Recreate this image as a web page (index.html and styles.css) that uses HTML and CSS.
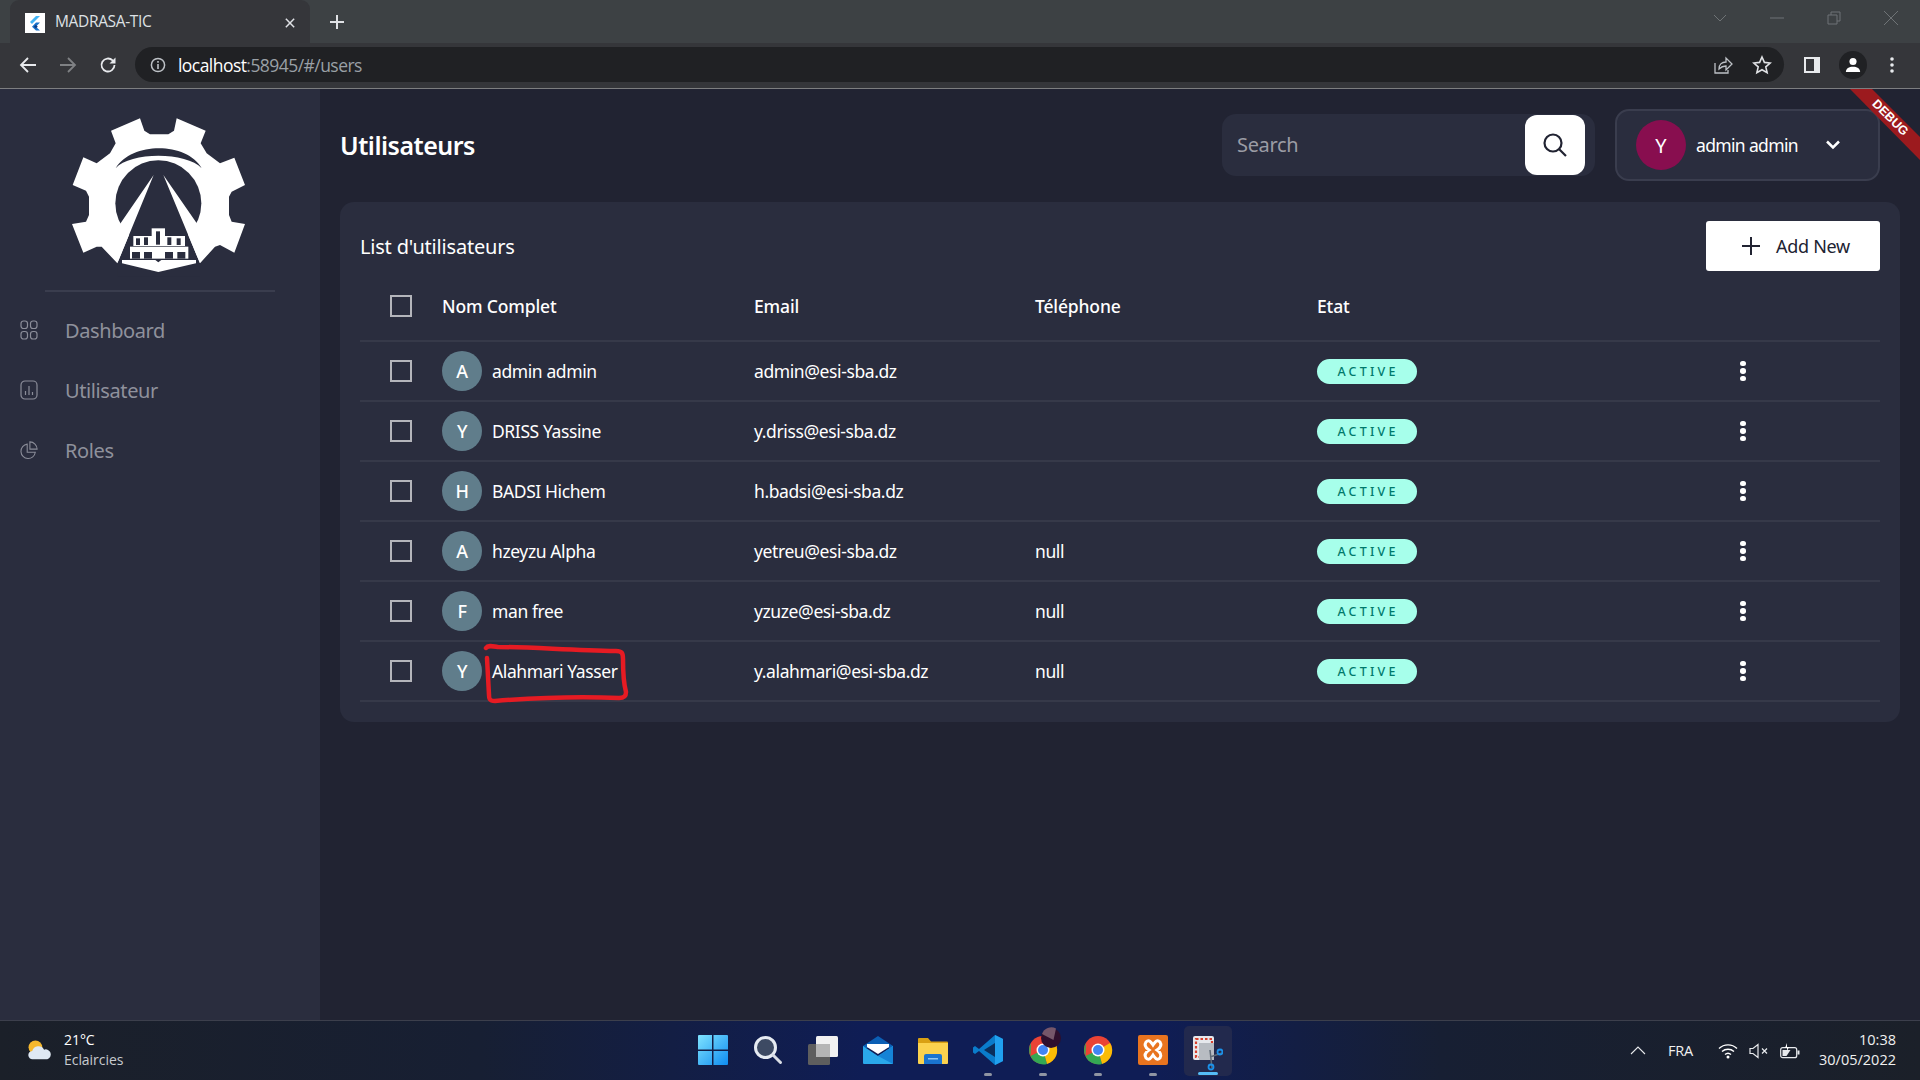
FILE: index.html
```html
<!DOCTYPE html>
<html lang="fr">
<head>
<meta charset="utf-8">
<title>MADRASA-TIC</title>
<link rel="stylesheet" href="styles.css">
</head>
<body>
<div class="window">
  <div class="tabstrip">
    <div class="tab">
      <svg class="favicon" viewBox="0 0 20 20"><rect width="20" height="20" fill="#fff"/><path d="M11 3h4l-8 8-2-2z" fill="#42b4f5"/><path d="M11 9.5h4l-4.2 4.2 4.2 3.8h-4l-4-3.8z" fill="#1a73c9"/><path d="M8.8 13.7l2-2 2 2-2 1.9z" fill="#0b3e8a"/></svg>
      <span class="tab-title">MADRASA-TIC</span>
      <svg class="tab-close" viewBox="0 0 12 12"><path d="M1 1l10 10M11 1L1 11" stroke="#dfe1e5" stroke-width="1.8"/></svg>
    </div>
    <svg class="tab-new" viewBox="0 0 16 16"><path d="M8 1v14M1 8h14" stroke="#dfe1e5" stroke-width="2"/></svg>
    <div class="winctl">
      <svg viewBox="0 0 14 14"><path d="M1 4l6 6 6-6" fill="none" stroke="#6f7376" stroke-width="1"/></svg>
      <svg viewBox="0 0 14 14"><path d="M0 7h14" stroke="#6f7376" stroke-width="1"/></svg>
      <svg viewBox="0 0 14 14"><path d="M1 4h9v9H1zM4 4V1h9v9h-3" fill="none" stroke="#6f7376" stroke-width="1"/></svg>
      <svg viewBox="0 0 14 14"><path d="M0 0l14 14M14 0L0 14" stroke="#6f7376" stroke-width="1"/></svg>
    </div>
  </div>
  <div class="toolbar">
    <svg class="tb-nav" viewBox="0 0 18 18"><path d="M17 9H2M9 2L2 9l7 7" fill="none" stroke="#e8eaed" stroke-width="1.8"/></svg>
    <svg class="tb-nav" viewBox="0 0 18 18"><path d="M1 9h15M9 2l7 7-7 7" fill="none" stroke="#7f8184" stroke-width="1.8"/></svg>
    <svg class="tb-nav" viewBox="0 0 18 18"><path d="M15.5 9a6.5 6.5 0 1 1-1.9-4.6L15.5 6.500" fill="none" stroke="#e8eaed" stroke-width="1.8"/><path d="M16.500 1.500v6h-6z" fill="#e8eaed"/></svg>
    <div class="omnibox">
      <svg class="omni-info" viewBox="0 0 16 16"><circle cx="8" cy="8" r="6.600" fill="none" stroke="#bdc1c6" stroke-width="1.500"/><path d="M8 7v5M8 4v1.700" stroke="#bdc1c6" stroke-width="1.600"/></svg>
      <span class="url"><span class="url-host">localhost</span>:58945/#/users</span>
      <svg class="omni-share" viewBox="0 0 20 20"><path d="M2 8v10h13v-3" fill="none" stroke="#bdc1c6" stroke-width="1.300"/><path d="M6 14c0-5 3-7 7-7V3l6 6-6 6v-4c-3 0-5 1-7 3z" fill="none" stroke="#bdc1c6" stroke-width="1.300"/></svg>
      <svg class="omni-star" viewBox="0 0 20 20"><path d="M10 2l2.400 5.400 5.800.6-4.400 3.900 1.300 5.800L10 14.700l-5.100 3 1.300-5.800L1.800 8l5.800-.6z" fill="none" stroke="#e0e2e5" stroke-width="1.600"/></svg>
    </div>
    <div class="tb-right">
      <svg class="tb-panel" viewBox="0 0 18 18"><rect x="1" y="1" width="16" height="16" fill="#e8eaed"/><rect x="3" y="3" width="8" height="12" fill="#35363a"/></svg>
      <div class="tb-profile"><svg viewBox="0 0 18 18"><circle cx="9" cy="5" r="4" fill="#fff"/><path d="M1 17c0-4 3.500-6 8-6s8 2 8 6z" fill="#fff"/></svg></div>
      <svg class="tb-menu" viewBox="0 0 4 18"><circle cx="2" cy="3" r="1.800" fill="#e8eaed"/><circle cx="2" cy="9" r="1.800" fill="#e8eaed"/><circle cx="2" cy="15" r="1.800" fill="#e8eaed"/></svg>
    </div>
  </div>
  <div class="app">
    <aside class="sidebar">
      <svg class="logo" viewBox="0 0 660 570">
        <path fill="#fff" d="M183 92L270 55L283 92L300 103H355L372 92L380 55L467 92L452 130L470 160L510 190L553 173L585 255L545 275L537 290V345L545 365L585 372L553 458L510 435L495 440L450 490H202L155 440L140 440L100 458L66 372L108 365L117 345V290L108 272L68 255L100 172L140 190L180 160L197 130Z"/>
        <circle cx="325" cy="310" r="129" fill="#2a2d3e"/>
        <path fill="#2a2d3e" d="M311 225H340L450 490V530H202V490Z"/>
        <path fill="#fff" d="M311 225L208 375L202 490ZM340 225L446 378L450 490Z"/>
        <path fill="#2a2d3e" d="M197 205C245 125 410 125 455 205C410 155 240 155 197 205Z"/>
        <g fill="#fff">
          <rect x="250" y="408" width="155" height="30"/>
          <rect x="305" y="385" width="40" height="25"/>
          <rect x="240" y="440" width="175" height="36"/>
          <path d="M216 480H316L325 487L334 480H438V490L325 516L216 490Z"/>
        </g>
        <g fill="#2a2d3e">
          <rect x="258" y="415" width="12" height="20"/><rect x="282" y="412" width="12" height="23"/><rect x="318" y="394" width="12" height="40"/><rect x="352" y="412" width="12" height="23"/><rect x="380" y="415" width="12" height="20"/>
          <rect x="246" y="456" width="24" height="20"/><rect x="282" y="456" width="24" height="20"/><rect x="345" y="456" width="24" height="20"/><rect x="382" y="456" width="24" height="20"/>
        </g>
      </svg>
      <div class="side-divider"></div>
      <nav class="nav">
        <a class="nav-item"><svg viewBox="0 0 18 20"><g fill="none" stroke="#8b8d99" stroke-width="1.200"><rect x="1" y="1" width="6.500" height="7.500" rx="2.500"/><rect x="10.500" y="1" width="6.500" height="7.500" rx="2.500"/><rect x="1" y="11.500" width="6.500" height="7.500" rx="2.500"/><rect x="10.500" y="11.500" width="6.500" height="7.500" rx="2.500"/></g></svg><span>Dashboard</span></a>
        <a class="nav-item"><svg viewBox="0 0 18 20"><g fill="none" stroke="#8b8d99" stroke-width="1.200"><rect x="1" y="1" width="16" height="18" rx="4"/><path d="M5.500 11v4M9 6v9M12.500 12v3"/></g></svg><span>Utilisateur</span></a>
        <a class="nav-item"><svg viewBox="0 0 20 20"><g fill="none" stroke="#8b8d99" stroke-width="1.200"><path d="M8 3.500a8 8 0 1 0 9 9H8z"/><path d="M11 1a8 8 0 0 1 8 8h-8z"/></g></svg><span>Roles</span></a>
      </nav>
    </aside>
    <main class="main">
      <header class="topbar">
        <h1 class="page-title">Utilisateurs</h1>
        <div class="search">
          <span class="search-ph">Search</span>
          <button class="search-btn"><svg viewBox="0 0 26 26"><circle cx="11" cy="11" r="8.500" fill="none" stroke="#212332" stroke-width="2.200"/><path d="M17 17l7 7" stroke="#212332" stroke-width="2.200"/></svg></button>
        </div>
        <div class="user">
          <div class="user-avatar">Y</div>
          <span class="user-name">admin admin</span>
          <svg class="user-chev" viewBox="0 0 16 12"><path d="M2 2.500l6 6 6-6" fill="none" stroke="#fff" stroke-width="2.500"/></svg>
        </div>
      </header>
      <section class="card">
        <div class="card-head">
          <h2 class="card-title">List d'utilisateurs</h2>
          <button class="add-btn"><svg viewBox="0 0 18 18"><path d="M9 0v18M0 9h18" stroke="#212332" stroke-width="2"/></svg><span>Add New</span></button>
        </div>
        <div class="row row-head">
          <span class="check"></span><span>Nom Complet</span><span>Email</span><span>Téléphone</span><span>Etat</span>
        </div>
        <div class="row"><span class="check"></span><div class="who"><span class="ava">A</span><span>admin admin</span></div><span>admin@esi-sba.dz</span><span></span><span class="badge">ACTIVE</span><span class="dots"><i></i><i></i><i></i></span></div>
        <div class="row"><span class="check"></span><div class="who"><span class="ava">Y</span><span>DRISS Yassine</span></div><span>y.driss@esi-sba.dz</span><span></span><span class="badge">ACTIVE</span><span class="dots"><i></i><i></i><i></i></span></div>
        <div class="row"><span class="check"></span><div class="who"><span class="ava">H</span><span>BADSI Hichem</span></div><span>h.badsi@esi-sba.dz</span><span></span><span class="badge">ACTIVE</span><span class="dots"><i></i><i></i><i></i></span></div>
        <div class="row"><span class="check"></span><div class="who"><span class="ava">A</span><span>hzeyzu Alpha</span></div><span>yetreu@esi-sba.dz</span><span>null</span><span class="badge">ACTIVE</span><span class="dots"><i></i><i></i><i></i></span></div>
        <div class="row"><span class="check"></span><div class="who"><span class="ava">F</span><span>man free</span></div><span>yzuze@esi-sba.dz</span><span>null</span><span class="badge">ACTIVE</span><span class="dots"><i></i><i></i><i></i></span></div>
        <div class="row"><span class="check"></span><div class="who"><span class="ava">Y</span><span>Alahmari Yasser</span></div><span>y.alahmari@esi-sba.dz</span><span>null</span><span class="badge">ACTIVE</span><span class="dots"><i></i><i></i><i></i></span></div>
      </section>
    </main>
    <svg class="debug" viewBox="0 0 70 72"><path d="M0 0H22L70 48V71Z" fill="#9c1a1e"/><text x="0" y="0" class="debug-text" transform="translate(37.500 31.500) rotate(45)" text-anchor="middle">DEBUG</text></svg>
    <svg class="scribble" viewBox="0 0 150 66"><path d="M3 6c2-3 6-2 12-1 30 0 70 3 118 4 6 0 7 2 7 8 0 12 0 22 3 33 0 5-3 6-7 6-40-2-87 0-124 3-6 0-6-3-6-6L4 16" fill="none" stroke="#e61b23" stroke-width="4.500" stroke-linecap="round" stroke-linejoin="round"/></svg>
  </div>
  <footer class="taskbar">
    <div class="weather">
      <svg viewBox="0 0 28 24"><circle cx="9" cy="8" r="7.500" fill="#f5b82e"/><path d="M6 21a4.500 4.500 0 0 1-.5-9 7 7 0 0 1 13-1.500A5.500 5.500 0 0 1 22 21z" fill="#dfe9f3"/></svg>
      <div class="weather-text"><span class="w1">21°C</span><span class="w2">Eclaircies</span></div>
    </div>
    <div class="apps">
      <svg class="ti" viewBox="0 0 30 30"><defs><linearGradient id="wg" x1="0" y1="0" x2="1" y2="1"><stop offset="0" stop-color="#7fe3ff"/><stop offset="1" stop-color="#0f8cf0"/></linearGradient></defs><path fill="url(#wg)" d="M0 1a1 1 0 0 1 1-1h13v14.500H0zM15.500 0H29a1 1 0 0 1 1 1v13.500H15.500zM0 16h14v14H1a1 1 0 0 1-1-1zM15.500 16H30v13a1 1 0 0 1-1 1H15.500z"/></svg>
      <svg class="ti" viewBox="0 0 30 30"><circle cx="12.500" cy="12.500" r="10" fill="#3d4a63" stroke="#e6ebf2" stroke-width="3"/><path d="M20 20l7.500 7.500" stroke="#d8dde5" stroke-width="3" stroke-linecap="round"/></svg>
      <svg class="ti" viewBox="0 0 30 30"><rect x="0" y="9" width="22" height="21" rx="1.500" fill="#5e5e5e"/><rect x="8" y="1" width="22" height="21" rx="1.500" fill="#f1f1f1"/><rect x="8" y="9" width="14" height="13" fill="#b5b5b5"/></svg>
      <svg class="ti" viewBox="0 0 30 30"><path d="M15 1L30 11V13H0V11z" fill="#0b5fb5"/><path d="M4 9h22v3l-11 7-11-7z" fill="#fff"/><path d="M0 11l15 10 15-10v17a1 1 0 0 1-1 1H1a1 1 0 0 1-1-1z" fill="#2aa8ea"/><path d="M30 11v18l-15-8z" fill="#1583d6"/></svg>
      <svg class="ti" viewBox="0 0 30 30"><path d="M0 4a1 1 0 0 1 1-1h9l3 3.500h16a1 1 0 0 1 1 1V8H0z" fill="#d9a013"/><path d="M0 8h30v20a1 1 0 0 1-1 1H1a1 1 0 0 1-1-1z" fill="#fbd24e"/><path d="M6 21a2 2 0 0 1 2-2h14a2 2 0 0 1 2 2v8H6z" fill="#1a74cf"/><rect x="10" y="23" width="10" height="1.500" fill="#8ec5f2"/></svg>
      <svg class="ti" viewBox="0 0 30 30"><path d="M22 0l8 4v22l-8 4-16-14-4 3-2-1.500V12.500L2 11l4 3z" fill="#0a7ccb"/><path d="M22 0l8 4v22l-8 4z" fill="#20a0ef"/><path d="M22 8L11 15l11 7z" fill="#0a2f5c"/></svg>
      <svg class="ti ti-over" viewBox="0 0 30 30"><circle cx="15" cy="15" r="14" fill="#ea4335"/><path d="M15 15L27 8a14 14 0 0 1-8 21z" fill="#fbbc05"/><path d="M15 15l4 14A14 14 0 0 1 2.500 21z" fill="#34a853"/><path d="M2.500 21A14 14 0 0 1 3 8z" fill="#34a853"/><circle cx="15" cy="15" r="6.500" fill="#fff"/><circle cx="15" cy="15" r="5" fill="#4285f4"/><circle cx="23" cy="3" r="10" fill="#2e0f2d"/><path d="M14 -1a10 10 0 0 1 14-5.500L25.500 5z" fill="#75566a"/></svg>
      <svg class="ti" viewBox="0 0 30 30"><circle cx="15" cy="15" r="14" fill="#ea4335"/><path d="M15 15L27 8a14 14 0 0 1-8 21z" fill="#fbbc05"/><path d="M15 15l4 14A14 14 0 0 1 2.500 21z" fill="#34a853"/><path d="M2.500 21A14 14 0 0 1 3 8z" fill="#34a853"/><circle cx="15" cy="15" r="6.500" fill="#fff"/><circle cx="15" cy="15" r="5" fill="#4285f4"/></svg>
      <svg class="ti" viewBox="0 0 30 30"><rect width="30" height="30" rx="2" fill="#e8741f"/><path d="M8 7c3-3 5 0 7 3 2-3 4-6 7-3 2 3 0 6-3 8 3 2 5 5 3 8-3 3-5 0-7-3-2 3-4 6-7 3-2-3 0-6 3-8-3-2-5-5-3-8z" fill="none" stroke="#fff" stroke-width="3"/></svg>
      <div class="snip">
        <svg viewBox="0 0 30 36"><rect x="0" y="0" width="21" height="24" rx="2" fill="#e6e8ec"/><rect x="3" y="3" width="16" height="18" fill="none" stroke="#d8412f" stroke-width="2.200" stroke-dasharray="2.500 2"/><rect x="6" y="7" width="15" height="17" fill="#b8bcc2"/><path d="M17 21l12-4M17 14l2 18" stroke="#5f6a76" stroke-width="1.500"/><circle cx="27" cy="16" r="2.500" fill="none" stroke="#1b90e8" stroke-width="1.800"/><circle cx="18" cy="31" r="2.500" fill="none" stroke="#1b90e8" stroke-width="1.800"/></svg>
        <i class="snip-bar"></i>
      </div>
      <i class="pip pip1"></i><i class="pip pip2"></i><i class="pip pip3"></i><i class="pip pip4"></i>
    </div>
    <div class="tray">
      <svg class="tray-chev" viewBox="0 0 16 9"><path d="M1 8l7-7 7 7" fill="none" stroke="#e8eaed" stroke-width="1.100"/></svg>
      <span class="lang">FRA</span>
      <svg class="tray-wifi" viewBox="0 0 20 16"><g fill="none" stroke="#fff" stroke-width="1.400"><path d="M1 5.500a13 13 0 0 1 18 0"/><path d="M4 8.500a9 9 0 0 1 12 0"/><path d="M7 11.500a4.500 4.500 0 0 1 6 0"/></g><circle cx="10" cy="14" r="1.500" fill="#fff"/></svg>
      <svg class="tray-snd" viewBox="0 0 20 16"><path d="M1 5.500h3l5-4v13l-5-4H1z" fill="none" stroke="#e8eaed" stroke-width="1.200"/><path d="M13 5.500l5 5M18 5.500l-5 5" stroke="#e8eaed" stroke-width="1.200"/></svg>
      <svg class="tray-bat" viewBox="0 0 20 16"><rect x=".7" y="4.700" width="16" height="10" rx="2" fill="none" stroke="#e8eaed" stroke-width="1.200"/><rect x="17.500" y="7.500" width="2" height="4" fill="#e8eaed"/><path d="M2.500 13V7h8l-4 6z" fill="#e8eaed"/><path d="M5 5l2-5v4h2l-2 4V5z" fill="#fff"/></svg>
      <div class="clock"><span>10:38</span><span>30/05/2022</span></div>
    </div>
  </footer>
</div>
</body>
</html>
```
FILE: styles.css
```css
* { box-sizing: border-box; }
html, body { margin: 0; padding: 0; height: 100%; overflow: hidden; }
body { font-family: "Noto Sans", sans-serif; background: #212332; color: #fff; }
svg { display: block; flex: none; }
.window { display: flex; flex-direction: column; height: 1080px; width: 1920px; position: relative; }

/* browser chrome */
.tabstrip { height: 43px; background: #3d4144; display: flex; align-items: stretch; padding-left: 10px; font-family: "Open Sans", sans-serif; }
.tab { width: 300px; background: #35363a; border-radius: 9px 9px 0 0; display: flex; align-items: center; padding: 0 15px; }
.favicon { width: 20px; height: 20px; margin-top: 2px; }
.tab-title { flex: 1; margin: -2px 0 0 10px; font-size: 15.500px; letter-spacing: -.35px; color: #dee1e5; }
.tab-close { width: 10px; height: 10px; margin-top: 3px; margin-right: 0; }
.tab-new { width: 16px; height: 16px; margin: 14px 0 0 19px; }
.winctl { margin-left: auto; display: flex; align-items: center; gap: 43px; padding-right: 22px; padding-bottom: 8px; }
.winctl svg { width: 14px; height: 14px; }
.toolbar { height: 46px; background: #35363a; border-bottom: 1px solid #7d7e80; display: flex; align-items: center; padding: 0 21px 2px 19px; }
.tb-nav { width: 18px; height: 18px; margin-right: 22px; }
.omnibox { margin-left: -4px; width: 1649px; height: 35px; border-radius: 18px; background: #202124; display: flex; align-items: center; padding: 0 12px 0 15px; font-family: "Open Sans", sans-serif; }
.omni-info { width: 16px; height: 16px; }
.url { margin-left: 12px; font-size: 17.500px; letter-spacing: -.55px; color: #9aa0a6; flex: 1; }
.url-host { color: #fff; }
.omni-share { width: 20px; height: 20px; margin-right: 19px; }
.omni-star { width: 20px; height: 20px; }
.tb-right { display: flex; align-items: center; margin-left: 19px; }
.tb-panel { width: 18px; height: 18px; }
.tb-profile { width: 28px; height: 28px; border-radius: 50%; background: #202124; display: flex; align-items: center; justify-content: center; margin-left: 18px; }
.tb-profile svg { width: 16px; height: 16px; }
.tb-menu { width: 4px; height: 18px; margin-left: 23px; }

/* app */
.app { flex: 1; display: flex; position: relative; min-height: 0; }
.sidebar { width: 320px; background: #2a2d3e; flex: none; }
.logo { width: 220px; height: 190px; margin: 11px 0 0 50px; }
.side-divider { height: 2px; width: 230px; margin-left: 45px; background: #3a3d4e; }
.nav { margin-top: 8px; }
.nav-item { height: 60px; display: flex; align-items: center; color: #8f919c; font-size: 20px; padding-left: 20px; letter-spacing: -.4px; }
.nav-item svg { width: 18px; height: 20px; margin-right: 27px; }
.main { flex: 1; padding: 0 20px; min-width: 0; }
.topbar { height: 112px; margin-bottom: 1px; display: flex; align-items: center; padding-right: 20px; }
.page-title { margin: 0; font-size: 25px; font-weight: 600; letter-spacing: -.5px; flex: 1; }
.search { width: 373px; height: 62px; background: #2a2d3e; border-radius: 14px; display: flex; align-items: center; justify-content: space-between; padding: 0 10px 0 15px; margin-right: 20px; }
.search-ph { font-size: 20px; color: #9b9ca5; letter-spacing: -.35px; margin-top: -2px; }
.search-btn { width: 60px; height: 60px; background: #fff; border: 0; border-radius: 12px; display: flex; align-items: center; justify-content: center; padding: 0; }
.search-btn svg { width: 26px; height: 26px; }
.user { width: 265px; height: 72px; background: #2a2d3e; border: 2px solid #3a3d4e; border-radius: 14px; display: flex; align-items: center; padding-left: 19px; }
.user-avatar { width: 50px; height: 50px; border-radius: 50%; background: #880e4f; display: flex; align-items: center; justify-content: center; font-size: 20px; }
.user-name { margin-left: 10px; font-size: 17.500px; letter-spacing: -.65px; }
.user-chev { width: 16px; height: 12px; margin-left: 27px; }
.card { background: #2a2d3e; border-radius: 14px; padding: 19px 20px 20px; }
.card-head { height: 50px; display: flex; align-items: center; justify-content: space-between; }
.card-title { margin: 0; font-size: 20px; font-weight: 400; letter-spacing: -.2px; }
.add-btn { width: 174px; height: 50px; border: 0; border-radius: 3px; background: #fff; color: #212332; display: flex; align-items: center; justify-content: center; gap: 16px; font: 400 18px "Noto Sans", sans-serif; letter-spacing: -.3px; padding: 0 0 0 6px; }
.add-btn svg { width: 18px; height: 18px; }
.row { height: 60px; display: grid; grid-template-columns: 52px 312px 281px 282px 400px 52px; align-items: center; padding-left: 30px; border-bottom: 2px solid #363949; font-size: 17.500px; letter-spacing: -.4px; }
.row-head { height: 71px; font-weight: 500; letter-spacing: -.15px; }
.check { width: 22px; height: 22px; border: 2.500px solid #b4b5bb; }
.who { display: flex; align-items: center; gap: 10px; }
.ava { width: 40px; height: 40px; border-radius: 50%; background: #607d8b; display: flex; align-items: center; justify-content: center; font-size: 18px; font-weight: 500; }
.badge { width: 100px; height: 25px; border-radius: 13px; background: #a7ffeb; color: #00796b; font-size: 12.500px; font-weight: 500; letter-spacing: 3.200px; text-align: center; line-height: 25px; padding-left: 2px; }
.dots { display: flex; flex-direction: column; align-items: center; gap: 2px; }
.dots i { width: 5.500px; height: 5.500px; border-radius: 50%; background: #fff; }
.debug { position: absolute; right: 0; top: 0; width: 70px; height: 72px; }
.debug-text { font: 700 12.500px "Liberation Sans", sans-serif; fill: #fff; }
.scribble { position: absolute; left: 483px; top: 553px; width: 150px; height: 66px; }

/* taskbar */
.taskbar { height: 60px; flex: none; border-top: 1px solid #3c3f4c; background: linear-gradient(90deg, #1b2029 0, #171f33 25%, #0f1d55 45%, #0f1d55 60%, #171f33 75%, #1b2029 100%); display: flex; align-items: center; position: relative; font-family: "Open Sans", sans-serif; }
.weather { position: absolute; left: 27px; display: flex; align-items: center; gap: 11px; }
.weather svg { width: 26px; height: 22px; }
.weather-text { display: flex; flex-direction: column; font-size: 14px; line-height: 20px; letter-spacing: -.05px; margin-top: -2px; }
.w2 { color: #c8cbd0; }
.apps { display: flex; align-items: center; gap: 25px; margin-left: 698px; padding-bottom: 2px; position: relative; height: 100%; }
.ti { width: 30px; height: 30px; }
.ti-over { overflow: visible; }
.snip { width: 48px; height: 50px; background: #22294d; border-radius: 5px; margin: 2px 0 0 -9px; display: flex; justify-content: center; padding-top: 10px; position: relative; }
.snip svg { width: 30px; height: 36px; }
.snip-bar { position: absolute; left: 14px; bottom: 1px; width: 20px; height: 3px; border-radius: 2px; background: #55bdf7; }
.pip { position: absolute; bottom: 4px; width: 8px; height: 3px; border-radius: 2px; background: #8f95a3; }
.pip1 { left: 286px; } .pip2 { left: 341px; } .pip3 { left: 396px; } .pip4 { left: 451px; }
.tray { position: absolute; left: 1630px; right: 24px; display: flex; align-items: center; }
.tray-chev { width: 16px; height: 9px; }
.lang { margin-left: 22px; font-size: 14.500px; letter-spacing: -.2px; color: #f0f0f0; }
.tray-wifi { width: 20px; height: 16px; margin-left: 25px; }
.tray-snd { width: 20px; height: 16px; margin-left: 11px; }
.tray-bat { width: 20px; height: 16px; margin-left: 11px; }
.clock { margin-left: auto; display: flex; flex-direction: column; align-items: flex-end; font-size: 14.500px; line-height: 20px; letter-spacing: 0; color: #f0f0f0; margin-top: -2px; }
```
